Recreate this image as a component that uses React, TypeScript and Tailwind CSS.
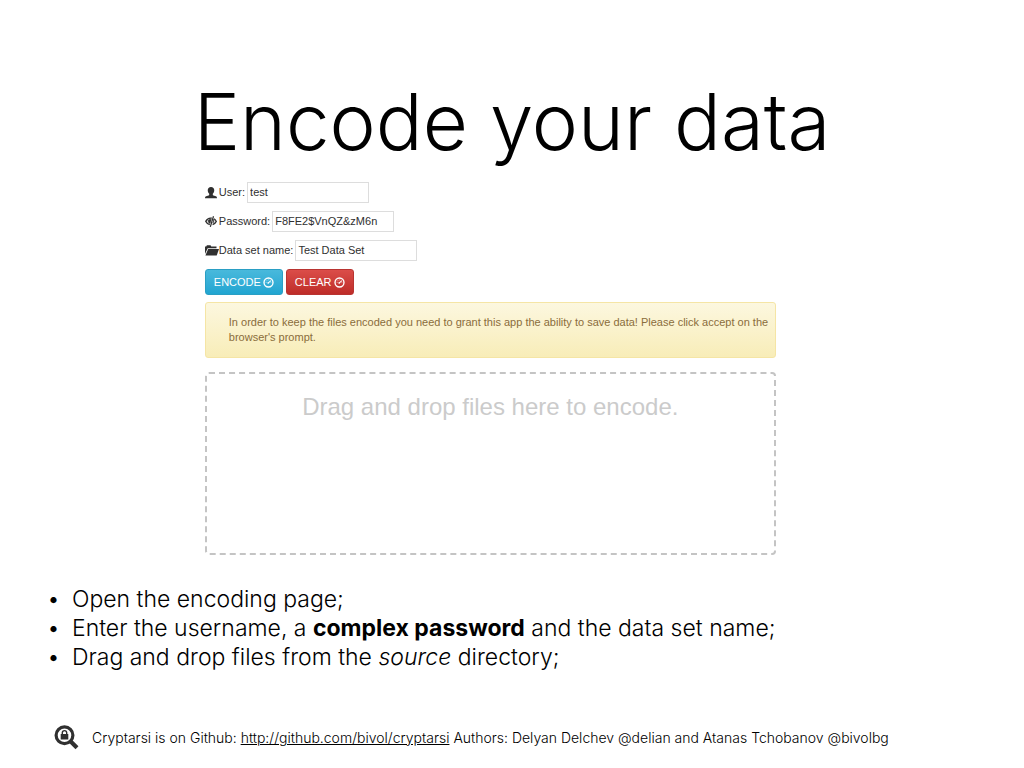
import { useState, type ReactNode } from "react";

function UserIcon() {
  return (
    <svg viewBox="0 0 14 14" className="h-3 w-3 shrink-0" fill="#303030" aria-hidden="true">
      <path d="M7 0C4.600 0 3.200 1.600 3.200 3.900c0 1.700.6 3.200 1.700 4.100v1c0 .4-.3.7-.8.9L1.300 10.900C.4 11.300 0 11.900 0 13h14c0-1.100-.4-1.700-1.300-2.100L9.900 9.900c-.5-.2-.8-.5-.8-.9V8c1.100-.9 1.700-2.400 1.700-4.100C10.800 1.600 9.400 0 7 0Z" />
    </svg>
  );
}

function EyeCloseIcon() {
  return (
    <svg viewBox="0 0 14 14" className="h-3 w-3 shrink-0" fill="none" stroke="#303030" aria-hidden="true">
      <path d="M8 2.600C4.800 2.100 2.100 3.900.9 6.300c.9 1.800 2.600 3.300 4.700 3.800" strokeWidth="1.500" />
      <path d="M10.500 3.200c1.200.7 2.100 1.800 2.700 3.100-.9 1.800-2.400 3.200-4.300 3.800" strokeWidth="1.500" />
      <path d="M7.400 3.800 5.900 8.800C4.200 8.200 3.400 6.700 3.700 5.100 4.400 4.100 5.800 3.500 7.400 3.800Z" fill="#303030" strokeWidth="0.6" />
      <path d="M10 3.800c.7 1.500.4 3.300-.9 4.500" strokeWidth="1.300" />
      <path d="M9.900.3 6.200 12.700" strokeWidth="1.400" />
    </svg>
  );
}

function FolderIcon() {
  return (
    <svg viewBox="0 0 14 12" className="h-3 w-3.5 shrink-0" fill="#303030" aria-hidden="true">
      <path d="M0 9V1.500h1.200L1.900.3h3.600l.8 1.200h5.200v1.800H2.700L0 9Z" />
      <path d="M3.200 4H14l-2.300 6.500H.4L3.200 4Z" />
    </svg>
  );
}

function DialIcon() {
  return (
    <svg viewBox="0 0 12 12" className="h-[11px] w-[11px] shrink-0" fill="none" stroke="white" aria-hidden="true">
      <circle cx="6" cy="6" r="4.900" strokeWidth="1.500" />
      <path d="M5.500 6.700 8.700 4" strokeWidth="1.200" />
      <path d="M3 5.800h.8M4.200 3.700l.4.500M6.300 2.800v.7M8.300 6.200H9" strokeWidth="0.900" />
      <circle cx="5.600" cy="6.500" r="0.900" fill="white" stroke="none" />
    </svg>
  );
}

function LogoIcon() {
  return (
    <svg viewBox="0 0 26 26" className="h-[26px] w-[26px] shrink-0" fill="none" aria-hidden="true">
      <circle cx="10.500" cy="10.300" r="8.400" stroke="#303030" strokeWidth="3.200" />
      <path d="m16.700 16.600 6.300 6.100" stroke="#303030" strokeWidth="4.200" />
      <rect x="6.700" y="9" width="7.600" height="5.600" rx="0.500" fill="#303030" />
      <path d="M8.300 9.500V7.800a2.200 2.200 0 0 1 4.400 0v1.700" stroke="#303030" strokeWidth="1.400" />
    </svg>
  );
}

type FieldProps = {
  id: string;
  label: string;
  icon: ReactNode;
  tight?: boolean;
  value: string;
  onChange: (value: string) => void;
};

function Field({ id, label, icon, tight, value, onChange }: FieldProps) {
  return (
    <div className="flex h-[21px] items-center gap-0.5">
      <label htmlFor={id} className={tight ? "flex items-center" : "flex items-center gap-0.5"}>
        {icon}
        <span>{label}</span>
      </label>
      <input
        id={id}
        type="text"
        value={value}
        onChange={(event) => onChange(event.target.value)}
        className="h-full w-[122px] border border-[#dddddd] bg-white px-0.5 pb-0.5"
      />
    </div>
  );
}

export default function App() {
  const [user, setUser] = useState("test");
  const [password, setPassword] = useState("F8FE2$VnQZ&zM6n");
  const [name, setName] = useState("Test Data Set");

  return (
    <main className="min-h-screen bg-white pt-[74px] font-['Inter','Liberation_Sans',sans-serif] font-light text-black">
      <h1 className="text-center text-[78px] leading-[95px]">Encode your data</h1>

      <section className="mr-8 ml-[20%] max-w-[571px] pt-[13px] font-['Liberation_Sans',Arial,sans-serif] text-[11px] leading-[15px] font-normal text-[#303030]">
        <form className="flex flex-col gap-2" onSubmit={(event) => event.preventDefault()}>
          <Field id="user" label="User:" icon={<UserIcon />} value={user} onChange={setUser} />
          <Field id="password" label="Password:" icon={<EyeCloseIcon />} value={password} onChange={setPassword} />
          <Field id="name" label="Data set name:" icon={<FolderIcon />} tight value={name} onChange={setName} />
          <div className="flex gap-[3px] text-white">
            <button
              type="submit"
              className="flex h-[26px] items-center justify-center gap-0.5 rounded-[3px] border border-[#2a9fc4] bg-linear-to-b from-[#48b9dc] to-[#20a5d1] px-2"
            >
              ENCODE <DialIcon />
            </button>
            <button
              type="button"
              className="flex h-[26px] items-center justify-center gap-0.5 rounded-[3px] border border-[#b93431] bg-linear-to-b from-[#db4d49] to-[#be2c28] px-2"
              onClick={() => {
                setUser("");
                setPassword("");
                setName("");
              }}
            >
              CLEAR <DialIcon />
            </button>
          </div>
        </form>
        <p className="mt-[7px] rounded-[3px] border border-[#f5e5a5] bg-linear-to-b from-[#fcf7df] to-[#f8edb8] py-3 pr-1 pl-[23px] text-[#8a6d3b]">
          In order to keep the files encoded you need to grant this app the ability to save data! Please click accept on the browser's prompt.
        </p>
        <div className="mt-[14px] min-h-[183px] rounded-[4px] border-2 border-dashed border-[#c4c4c4] pt-[17px] text-center text-[24px] leading-8 text-[#cbcbcb]">
          Drag and drop files here to encode.
        </div>
      </section>

      <ul className="mt-[30px] ml-[47px] list-none text-[23px] leading-[29px]">
        <li className="flex gap-3"><span>•</span><span>Open the encoding page;</span></li>
        <li className="flex gap-3"><span>•</span><span>Enter the username, a <strong className="font-bold">complex password</strong> and the data set name;</span></li>
        <li className="flex gap-3"><span>•</span><span>Drag and drop files from the <em>source</em> directory;</span></li>
      </ul>

      <footer className="mt-[53px] ml-[54px] flex items-center gap-3 text-[14px] leading-5">
        <LogoIcon />
        <p>
          Cryptarsi is on Github:{" "}
          <a href="http://github.com/bivol/cryptarsi" className="underline">http://github.com/bivol/cryptarsi</a>{" "}
          Authors: Delyan Delchev @delian and Atanas Tchobanov @bivolbg
        </p>
      </footer>
    </main>
  );
}
